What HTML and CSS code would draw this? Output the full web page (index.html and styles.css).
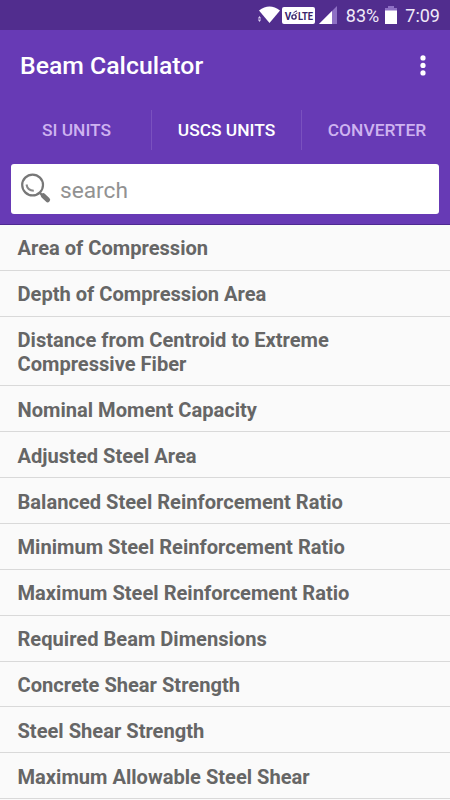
FILE: index.html
```html
<!DOCTYPE html>
<html lang="en">

<head>
    <meta charset="UTF-8">
    <title>Beam Calculator</title>
    <link rel="stylesheet" href="styles.css">
</head>

<body>

    <div class="status_bar">
        <svg class="wifi" width="26" height="22" viewBox="0 0 26 22">
            <path d="M2 6.5 Q12.5 -1.5 23 6.5 L12.5 19 Z" fill="#fff" />
            <path d="M.8 14.6 L2.5 12 L4.2 14.6 Z M.8 15.4 L2.5 18 L4.2 15.4 Z" fill="#d9cdf0" />
        </svg>
        <svg class="volte" width="33" height="17" viewBox="0 0 33 17">
            <rect width="33" height="17" rx="2" fill="#fff" />
            <text x="2.8" y="12.5" class="volte_text">V</text>
            <circle cx="12" cy="10" r="2.1" fill="none" stroke="#38246b" stroke-width="1.4" />
            <path d="M11.5 6.3 Q12.5 4 15 4 M13.5 7.5 Q14 6 15.5 6" fill="none" stroke="#38246b" stroke-width="1" />
            <text x="16" y="12.5" class="volte_text" textLength="15" lengthAdjust="spacingAndGlyphs">LTE</text>
        </svg>
        <svg class="signal" width="18" height="18" viewBox="0 0 18 18">
            <path d="M0 18 L18 0 V18 Z" fill="#8e70c4" />
            <path d="M0 18 L13 5 V18 Z" fill="#fff" />
        </svg>
        <span class="percent">83%</span>
        <svg class="battery" width="12" height="18" viewBox="0 0 12 18">
            <path d="M0 2 H3 V0 H9 V2 H12 V5 H0 Z" fill="#8e70c4" />
            <rect y="4.5" width="12" height="13.5" fill="#fff" />
        </svg>
        <span class="clock">7:09</span>
    </div>

    <div class="header">
        <div class="title_bar">
            <h1>Beam Calculator</h1>
            <svg width="6" height="22" viewBox="0 0 6 22" fill="#fff">
                <circle cx="3" cy="2.9" r="2.6" />
                <circle cx="3" cy="10.4" r="2.6" />
                <circle cx="3" cy="17.9" r="2.6" />
            </svg>
        </div>

        <div class="tabs">
            <div class="tab">SI UNITS</div>
            <div class="tab active">USCS UNITS</div>
            <div class="tab">CONVERTER</div>
        </div>

        <div class="search_box">
            <svg width="32" height="32" viewBox="0 0 32 32" fill="none">
                <path d="M19.5 19.5 L23 23" stroke="#777" stroke-width="2.4" />
                <path d="M23.3 22.7 L27.6 26.8" stroke="#777" stroke-width="5" stroke-linecap="round" />
                <circle cx="12.6" cy="12" r="10.4" stroke="#777" stroke-width="2.2" />
                <path d="M6.5 11.5 Q7.5 17.5 13.8 17.8" stroke="#888" stroke-width="2" />
            </svg>
            <span>search</span>
        </div>
    </div>

    <ul class="list">
        <li>Area of Compression</li>
        <li>Depth of Compression Area</li>
        <li>Distance from Centroid to Extreme Compressive Fiber</li>
        <li>Nominal Moment Capacity</li>
        <li>Adjusted Steel Area</li>
        <li>Balanced Steel Reinforcement Ratio</li>
        <li>Minimum Steel Reinforcement Ratio</li>
        <li>Maximum Steel Reinforcement Ratio</li>
        <li>Required Beam Dimensions</li>
        <li>Concrete Shear Strength</li>
        <li>Steel Shear Strength</li>
        <li>Maximum Allowable Steel Shear</li>
    </ul>

</body>

</html>
```

FILE: styles.css
```css
* {
    margin: 0;
    padding: 0;
    box-sizing: border-box;
}

body {
    width: 450px;
    height: 800px;
    overflow: hidden;
    background-color: #fafafa;
    font-family: Roboto, sans-serif;
}

.status_bar {
    display: flex;
    justify-content: flex-end;
    align-items: center;
    height: 30px;
    padding-right: 10px;
    background-color: #512d8e;
    color: #f0eaf8;
    font-size: 18px;
}

.wifi {
    margin-right: -1px;
}

.volte_text {
    font-size: 10px;
    font-weight: bold;
    fill: #38246b;
}

.signal {
    margin-left: 4px;
}

.percent {
    margin-left: 9px;
}

.battery {
    margin-left: 6px;
}

.clock {
    margin-left: 8px;
}

.header {
    height: 195px;
    background-color: #673ab5;
    border-bottom: 1px solid #4e2a91;
}

.title_bar {
    display: flex;
    justify-content: space-between;
    align-items: center;
    height: 72px;
    padding: 0 24.5px 0 20px;
}

.title_bar h1 {
    color: #fff;
    font-size: 24.8px;
    font-weight: 500;
    line-height: 28px;
}

.tabs {
    display: grid;
    grid-template-columns: 150px 150px 148px;
    height: 58px;
    padding: 8px 0 0 2px;
}

.tab {
    height: 40px;
    border-right: 1px solid #7a51bf;
    color: #ceb3f0;
    font-size: 17.4px;
    font-weight: 500;
    line-height: 41px;
    text-align: center;
}

.tab:last-child {
    padding-left: 2px;
    border-right: none;
}

.tab.active {
    color: #fff;
}

.search_box {
    display: flex;
    align-items: center;
    height: 50px;
    margin: 4px 11px 0;
    padding-left: 9px;
    border-radius: 3px;
    background-color: #fff;
    color: #929292;
    font-size: 22.7px;
}

.search_box span {
    margin: 2px 0 0 8px;
}

.list {
    list-style: none;
}

.list li {
    padding: 12.4px 90px 8.5px 17.5px;
    border-bottom: 1px solid #d9d9d9;
    color: #666;
    font-size: 20.1px;
    font-weight: bold;
    line-height: 23.95px;
}
```
